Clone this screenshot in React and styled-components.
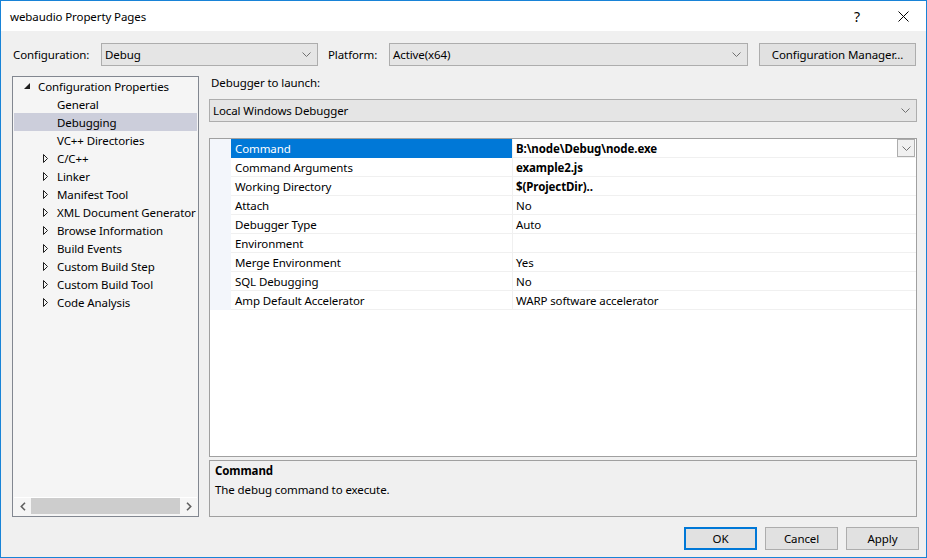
import React from "react";
import styled, { createGlobalStyle } from "styled-components";

const Global = createGlobalStyle`
  html, body { margin: 0; padding: 0; background: #f0f0f0; }
  body { font-family: "Noto Sans", "Open Sans", sans-serif; font-size: 11.5px; letter-spacing: -0.1px; color: #000; }
  * { box-sizing: border-box; }
`;

const Window = styled.div`
  width: 927px;
  height: 558px;
  border: 1px solid #1883d7;
  background: #f0f0f0;
  display: flex;
  flex-direction: column;
  overflow: hidden;
`;

const TitleBar = styled.div`
  height: 30px;
  flex: none;
  background: #fff;
  display: flex;
  align-items: center;
  padding-left: 9px;
`;

const TitleText = styled.div`
  flex: 1;
  line-height: 16px;
  padding-top: 1px;
`;

const TitleButton = styled.div`
  width: 46px;
  height: 30px;
  display: flex;
  align-items: center;
  justify-content: center;
  font-size: 14px;
`;

const Body = styled.div`
  flex: 1;
  display: flex;
  flex-direction: column;
  padding: 12px 7px 7px 11px;
`;

const TopRow = styled.div`
  height: 23px;
  display: flex;
  align-items: center;
`;

const Label = styled.div`
  width: ${(p) => p.$w}px;
  padding-left: ${(p) => p.$pl || 0}px;
  flex: none;
  white-space: nowrap;
  line-height: 16px;
`;

const Select = styled.div`
  width: ${(p) => (p.$w ? `${p.$w}px` : "auto")};
  height: 23px;
  flex: none;
  border: 1px solid #adadad;
  background: #e5e5e5;
  display: flex;
  align-items: center;
  padding: 0 0 0 3px;
  margin-right: ${(p) => p.$mr || 0}px;
  margin-top: ${(p) => p.$mt || 0}px;
`;

const SelectText = styled.div`
  flex: 1;
  line-height: 16px;
  white-space: nowrap;
`;

const ChevronBox = styled.div`
  width: 20px;
  height: 100%;
  display: flex;
  align-items: center;
  justify-content: center;
  padding-right: 2px;
`;

const Chevron = () => (
  <svg width="9" height="5" viewBox="0 0 9 5">
    <polyline points="0.5,0.5 4.5,4.5 8.5,0.5" fill="none" stroke="#707070" strokeWidth="1" />
  </svg>
);

const Button = styled.div`
  width: ${(p) => p.$w}px;
  height: 23px;
  flex: none;
  display: flex;
  align-items: center;
  justify-content: center;
  background: #e1e1e1;
  border: ${(p) => (p.$default ? "2px solid #0078d7" : "1px solid #adadad")};
  line-height: 16px;
  white-space: nowrap;
  margin-left: ${(p) => p.$ml || 0}px;
`;

const Main = styled.div`
  margin-top: 10px;
  height: 441px;
  display: flex;
  flex: none;
`;

const Tree = styled.div`
  width: 187px;
  flex: none;
  border: 1px solid #828790;
  background: #f5f5f5;
  display: flex;
  flex-direction: column;
`;

const TreeList = styled.div`
  flex: 1;
  overflow: hidden;
`;

const TreeRow = styled.div`
  height: 18px;
  margin: 0 1px;
  display: flex;
  align-items: center;
  padding-left: ${(p) => p.$indent}px;
  background: ${(p) => (p.$selected ? "#cccedb" : "transparent")};
  white-space: nowrap;
`;

const Twisty = styled.div`
  width: 14px;
  flex: none;
  display: flex;
  align-items: center;
`;

const ExpandedIcon = () => (
  <svg width="6" height="6" viewBox="0 0 6 6">
    <polygon points="6,0 6,6 0,6" fill="#1e1e1e" />
  </svg>
);

const CollapsedIcon = () => (
  <svg width="5" height="9" viewBox="0 0 5 9">
    <polygon points="0.5,0.5 4.5,4.5 0.5,8.5" fill="none" stroke="#1e1e1e" strokeWidth="1" />
  </svg>
);

const HScroll = styled.div`
  height: 17px;
  margin: 0 1px 2px 1px;
  display: flex;
  align-items: center;
  border-top: 1px solid #fff;
`;

const ScrollArrow = styled.div`
  width: 17px;
  height: 100%;
  display: flex;
  align-items: center;
  justify-content: center;
  flex: none;
`;

const ScrollThumb = styled.div`
  flex: 1;
  height: 100%;
  background: #cdcdcd;
`;

const ArrowLeft = () => (
  <svg width="6" height="9" viewBox="0 0 6 9">
    <polyline points="5,0.8 1.3,4.5 5,8.2" fill="none" stroke="#606060" strokeWidth="1.6" />
  </svg>
);
const ArrowRight = () => (
  <svg width="6" height="9" viewBox="0 0 6 9">
    <polyline points="1,0.8 4.7,4.5 1,8.2" fill="none" stroke="#606060" strokeWidth="1.6" />
  </svg>
);

const RightPanel = styled.div`
  width: 708px;
  margin-left: 10px;
  flex: none;
  display: flex;
  flex-direction: column;
`;

const PanelLabel = styled.div`
  height: 15px;
  line-height: 14px;
  padding-left: 2px;
`;

const Grid = styled.div`
  margin-top: 16px;
  flex: 1;
  border: 1px solid #a0a0a0;
  background: #fff;
  overflow: hidden;
`;

const GridRow = styled.div`
  height: 19px;
  display: flex;
`;

const Gutter = styled.div`
  width: 21px;
  flex: none;
  background: #f3f6fb;
`;

const NameCell = styled.div`
  width: 281px;
  flex: none;
  display: flex;
  align-items: center;
  padding-left: 4px;
  background: ${(p) => (p.$selected ? "#0078d7" : "#fff")};
  color: ${(p) => (p.$selected ? "#fff" : "#000")};
  border-bottom: 1px solid ${(p) => (p.$selected ? "#0078d7" : "#f0f0f0")};
  white-space: nowrap;
`;

const ValueCell = styled.div`
  flex: 1;
  display: flex;
  align-items: center;
  padding-left: 3px;
  border-left: 1px solid #f0f0f0;
  border-bottom: 1px solid #f0f0f0;
  font-weight: ${(p) => (p.$bold ? 700 : 400)};
  white-space: nowrap;
`;

const ValueText = styled.div`
  flex: 1;
`;

const CellDrop = styled.div`
  width: 18px;
  height: 18px;
  border: 1px solid #adadad;
  background: #f0f0f0;
  display: flex;
  align-items: center;
  justify-content: center;
  margin-right: 1px;
`;

const Desc = styled.div`
  margin-top: 3px;
  height: 57px;
  flex: none;
  border: 1px solid #a0a0a0;
  background: #f0f0f0;
  padding: 0 5px;
  line-height: 19px;
`;

const DescTitle = styled.div`
  font-weight: 700;
`;

const Footer = styled.div`
  margin-top: 10px;
  height: 23px;
  display: flex;
  justify-content: flex-end;
`;

const treeItems = [
  { label: "Configuration Properties", level: 0, icon: "expanded" },
  { label: "General", level: 1 },
  { label: "Debugging", level: 1, selected: true },
  { label: "VC++ Directories", level: 1 },
  { label: "C/C++", level: 1, icon: "collapsed" },
  { label: "Linker", level: 1, icon: "collapsed" },
  { label: "Manifest Tool", level: 1, icon: "collapsed" },
  { label: "XML Document Generator", level: 1, icon: "collapsed" },
  { label: "Browse Information", level: 1, icon: "collapsed" },
  { label: "Build Events", level: 1, icon: "collapsed" },
  { label: "Custom Build Step", level: 1, icon: "collapsed" },
  { label: "Custom Build Tool", level: 1, icon: "collapsed" },
  { label: "Code Analysis", level: 1, icon: "collapsed" },
];

const props = [
  { name: "Command", value: "B:\\node\\Debug\\node.exe", bold: true, selected: true },
  { name: "Command Arguments", value: "example2.js", bold: true },
  { name: "Working Directory", value: "$(ProjectDir)..", bold: true },
  { name: "Attach", value: "No" },
  { name: "Debugger Type", value: "Auto" },
  { name: "Environment", value: "" },
  { name: "Merge Environment", value: "Yes" },
  { name: "SQL Debugging", value: "No" },
  { name: "Amp Default Accelerator", value: "WARP software accelerator" },
];

export default function App() {
  return (
    <>
      <Global />
      <Window>
        <TitleBar>
          <TitleText>webaudio Property Pages</TitleText>
          <TitleButton>?</TitleButton>
          <TitleButton>
            <svg width="11" height="11" viewBox="0 0 11 11">
              <path d="M0.5 0.5 L10.5 10.5 M10.5 0.5 L0.5 10.5" stroke="#000" strokeWidth="1" />
            </svg>
          </TitleButton>
        </TitleBar>
        <Body>
          <TopRow>
            <Label $w={89} $pl={1}>Configuration:</Label>
            <Select $w={217} $mr={10}>
              <SelectText>Debug</SelectText>
              <ChevronBox><Chevron /></ChevronBox>
            </Select>
            <Label $w={61}>Platform:</Label>
            <Select $w={359}>
              <SelectText>Active(x64)</SelectText>
              <ChevronBox><Chevron /></ChevronBox>
            </Select>
            <Button $w={157} $ml={11}>Configuration Manager...</Button>
          </TopRow>
          <Main>
            <Tree>
              <TreeList>
                {treeItems.map((it) => (
                  <TreeRow
                    key={it.label}
                    $indent={it.level === 0 ? 10 : 29}
                    $selected={it.selected}
                  >
                    <Twisty>
                      {it.icon === "expanded" && <ExpandedIcon />}
                      {it.icon === "collapsed" && <CollapsedIcon />}
                    </Twisty>
                    {it.label}
                  </TreeRow>
                ))}
              </TreeList>
              <HScroll>
                <ScrollArrow><ArrowLeft /></ScrollArrow>
                <ScrollThumb />
                <ScrollArrow><ArrowRight /></ScrollArrow>
              </HScroll>
            </Tree>
            <RightPanel>
              <PanelLabel>Debugger to launch:</PanelLabel>
              <Select $mt={8}>
                <SelectText>Local Windows Debugger</SelectText>
                <ChevronBox><Chevron /></ChevronBox>
              </Select>
              <Grid>
                {props.map((p) => (
                  <GridRow key={p.name}>
                    <Gutter />
                    <NameCell $selected={p.selected}>{p.name}</NameCell>
                    <ValueCell $bold={p.bold}>
                      <ValueText>{p.value}</ValueText>
                      {p.selected && (
                        <CellDrop><Chevron /></CellDrop>
                      )}
                    </ValueCell>
                  </GridRow>
                ))}
              </Grid>
              <Desc>
                <DescTitle>Command</DescTitle>
                <div>The debug command to execute.</div>
              </Desc>
            </RightPanel>
          </Main>
          <Footer>
            <Button $w={73} $default>OK</Button>
            <Button $w={73} $ml={8}>Cancel</Button>
            <Button $w={73} $ml={8}>Apply</Button>
          </Footer>
        </Body>
      </Window>
    </>
  );
}
